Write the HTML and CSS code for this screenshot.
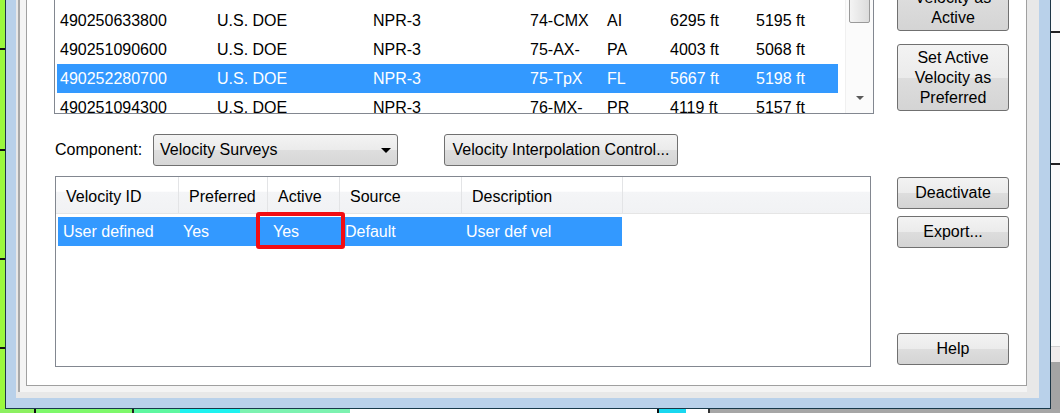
FILE: index.html
```html
<!DOCTYPE html>
<html lang="en">
<head>
<meta charset="UTF-8">
<meta name="viewport" content="width=device-width, initial-scale=1.0">
<title>Velocity Surveys</title>
<link rel="stylesheet" href="styles.css">
</head>
<body>
<div class="desktop">
  <div class="desk-row">
    <div class="bg-left"></div>

    <!-- dialog window -->
    <div class="window">
      <div class="client">
        <div class="frame">
          <div class="panel">
            <div class="content">

              <div class="main-col">
                <!-- wells list -->
                <div class="well-list">
                  <div class="rows">
                    <div class="row"><span>490250633800</span><span>U.S. DOE</span><span>NPR-3</span><span>74-CMX</span><span>AI</span><span>6295 ft</span><span>5195 ft</span></div>
                    <div class="row"><span>490251090600</span><span>U.S. DOE</span><span>NPR-3</span><span>75-AX-</span><span>PA</span><span>4003 ft</span><span>5068 ft</span></div>
                    <div class="row selected"><span>490252280700</span><span>U.S. DOE</span><span>NPR-3</span><span>75-TpX</span><span>FL</span><span>5667 ft</span><span>5198 ft</span></div>
                    <div class="row"><span>490251094300</span><span>U.S. DOE</span><span>NPR-3</span><span>76-MX-</span><span>PR</span><span>4119 ft</span><span>5157 ft</span></div>
                  </div>
                  <div class="scrollbar">
                    <div class="thumb"></div>
                    <div class="spacer"></div>
                    <div class="arrow-down"></div>
                  </div>
                </div>

                <!-- component selector -->
                <div class="component-row">
                  <label class="comp-label">Component:</label>
                  <div class="combo"><span>Velocity Surveys</span><i class="combo-arrow"></i></div>
                  <button class="btn interp-btn">Velocity Interpolation Control...</button>
                </div>

                <!-- velocity list -->
                <div class="listview">
                  <div class="lv-header">
                    <div class="hcell c1">Velocity ID</div>
                    <div class="hcell c2">Preferred</div>
                    <div class="hcell c3">Active</div>
                    <div class="hcell c4">Source</div>
                    <div class="hcell c5">Description</div>
                    <div class="hfill"></div>
                  </div>
                  <div class="lv-row selected">
                    <div class="cell c1">User defined</div>
                    <div class="cell c2">Yes</div>
                    <div class="cell c3">Yes</div>
                    <div class="cell c4">Default</div>
                    <div class="cell c5">User def vel</div>
                  </div>
                  <div class="highlight-box"></div>
                </div>
              </div>

              <div class="side-col">
                <button class="btn tall-btn first-btn">Set Preferred<br>Velocity as<br>Active</button>
                <button class="btn tall-btn">Set Active<br>Velocity as<br>Preferred</button>
                <button class="btn side-btn deactivate-btn">Deactivate</button>
                <button class="btn side-btn export-btn">Export...</button>
                <button class="btn side-btn help-btn">Help</button>
              </div>

            </div>
          </div>
        </div>
      </div>
    </div>

    <div class="bg-right"></div>
  </div>
  <div class="bg-bottom"></div>
</div>
</body>
</html>
```

FILE: styles.css
```css
html, body {
margin: 0;
padding: 0;
overflow: hidden;
}
body {
font-family: "Liberation Sans", Arial, sans-serif;
font-size: 16px;
color: #000;
background-color: #9bf83d;
}
.desktop {
display: flex;
flex-direction: column;
height: 413px;
width: 1060px;
}
.desk-row {
display: flex;
flex: 1;
min-height: 0;
}

/* background behind the dialog */
.bg-left {
width: 5px;
background:
  linear-gradient(#9bf83d 48px, #111 48px, #111 50px, #9bf83d 50px,
    #9bf83d 149px, #111 149px, #111 151px, #9bf83d 151px,
    #9bf83d 258px, #111 258px, #111 260px, #9bf83d 260px,
    #9bf83d 347px, #111 347px, #111 349px, #9bf83d 349px);
}
.bg-right {
flex: 1;
background:
  linear-gradient(#fafafa 31px, #222 31px, #222 33px, #fafafa 33px,
    #fafafa 163px, #222 163px, #222 165px, #fafafa 165px,
    #fafafa 346px, #cfcfcf 346px, #cfcfcf 347px, #efebeb 347px,
    #efebeb 362px, #a4a4a4 362px);
}
.bg-bottom {
height: 4px;
background: linear-gradient(90deg, #8cf060 0, #8cf060 34px, #111 34px, #111 36px,
  #7ef86a 36px, #7ef86a 132px, #222 132px, #222 134px, #5ef7a0 134px,
  #5ef7a0 180px, #1ef2f0 180px, #1ef2f0 240px, #7cf2b0 240px, #7cf2b0 350px,
  #fff 350px, #fff 657px, #111 657px, #111 659px, #19d8f0 659px, #19d8f0 686px,
  #fff 686px, #fff 708px, #333 708px, #333 710px, #a6a6a6 710px);
}

/* dialog frame */
.window {
width: 1046px;
box-sizing: border-box;
display: flex;
flex-direction: column;
background-color: #b9d1ea;
border-left: 1px solid #1d3646;
border-right: 1px solid #1d3646;
border-bottom: 1px solid #18394a;
padding: 0 11px 10px 10px;
}
.client {
flex: 1;
display: flex;
flex-direction: column;
background-color: #e8e8e8;
padding: 0 12px 6px 2px;
min-height: 0;
}
.frame {
flex: 1;
display: flex;
flex-direction: column;
background-color: #f4f4f4;
border-left: 2px solid #a9a9a9;
padding: 0 0 6px 6px;
min-height: 0;
}
.panel {
flex: 1;
background-color: #fff;
border: 1px solid #a0a0a0;
border-top: none;
overflow: hidden;
}
.content {
display: flex;
margin-top: -36px;
padding-left: 27px;
}

/* left column */
.main-col {
width: 820px;
display: flex;
flex-direction: column;
}
.well-list {
display: flex;
height: 150px;
box-sizing: border-box;
border: 1px solid #828790;
overflow: hidden;
}
.rows {
flex: 1;
padding: 41px 7px 0 2px;
}
.row {
display: grid;
grid-template-columns: 157px 156px 157px 77px 63px 86px auto;
height: 29px;
line-height: 30px;
padding-left: 3px;
white-space: nowrap;
}
.row.selected, .lv-row.selected {
background-color: #3399ff;
color: #fff;
}
.scrollbar {
width: 27px;
display: flex;
flex-direction: column;
align-items: center;
background-color: #fbfbfb;
border-left: 1px solid #f0f0f0;
}
.thumb {
margin-top: 18px;
width: 21px;
height: 40px;
box-sizing: border-box;
border: 1px solid #9a9a9a;
border-radius: 2px;
background: linear-gradient(90deg, #f4f4f4, #dcdcdc);
}
.spacer {
flex: 1;
}
.arrow-down {
width: 0;
height: 0;
border-left: 4px solid transparent;
border-right: 4px solid transparent;
border-top: 4px solid #5a5a5a;
margin-bottom: 13px;
}

/* component row */
.component-row {
display: flex;
align-items: center;
margin-top: 20px;
height: 32px;
}
.comp-label {
width: 98px;
padding-left: 1px;
}
.combo {
width: 245px;
height: 32px;
box-sizing: border-box;
display: flex;
align-items: center;
justify-content: space-between;
padding: 0 6px 0 6px;
border: 1px solid #707070;
border-radius: 3px;
background: linear-gradient(#f3f3f3 0%, #ebebeb 50%, #dedede 51%, #d6d6d6 100%);
}
.combo-arrow {
width: 0;
height: 0;
border-left: 5px solid transparent;
border-right: 5px solid transparent;
border-top: 5px solid #000;
}
.btn {
font-family: "Liberation Sans", Arial, sans-serif;
font-size: 16px;
color: #000;
border: 1px solid #707070;
border-radius: 3px;
background: linear-gradient(#f3f3f3 0%, #ebebeb 50%, #dddddd 51%, #d4d4d4 100%);
padding: 0;
margin: 0;
box-sizing: border-box;
}
.interp-btn {
margin-left: 46px;
width: 234px;
height: 32px;
}

/* velocity list view */
.listview {
position: relative;
margin-top: 10px;
margin-left: 1px;
width: 816px;
height: 191px;
box-sizing: border-box;
border: 1px solid #828790;
}
.lv-header {
display: flex;
height: 37px;
box-sizing: border-box;
border-bottom: 1px solid #e5e5e5;
background: linear-gradient(#ffffff 0%, #ffffff 40%, #f4f5f7 41%, #f1f2f4 100%);
}
.hcell {
box-sizing: border-box;
padding: 3px 0 0 10px;
line-height: 33px;
border-right: 1px solid #e3e4e6;
white-space: nowrap;
}
.hcell.c1 { width: 123px; }
.hcell.c2 { width: 89px; }
.hcell.c3 { width: 72px; }
.hcell.c4 { width: 122px; }
.hcell.c5 { width: 161px; }
.hfill {
flex: 1;
}
.lv-row {
display: flex;
width: 564px;
height: 29px;
margin: 3px 0 0 2px;
line-height: 30px;
}
.cell {
box-sizing: border-box;
padding-left: 5px;
white-space: nowrap;
}
.cell.c1 { width: 120px; }
.cell.c2 { width: 89px; }
.cell.c3 { width: 72px; padding-left: 6px; }
.cell.c4 { width: 122px; padding-left: 6px; }
.cell.c5 { width: 161px; }

/* red annotation box */
.highlight-box {
position: absolute;
left: 200px;
top: 35px;
width: 89px;
height: 37px;
box-sizing: border-box;
border: 4px solid #f20d12;
border-radius: 3px;
}

/* right column buttons */
.side-col {
display: flex;
flex-direction: column;
margin-left: 23px;
width: 112px;
}
.tall-btn {
height: 67px;
line-height: 20px;
}
.tall-btn + .tall-btn {
margin-top: 13px;
}
.side-btn {
height: 32px;
}
.deactivate-btn {
margin-top: 66px;
}
.export-btn {
margin-top: 7px;
}
.help-btn {
margin-top: 85px;
}
```
